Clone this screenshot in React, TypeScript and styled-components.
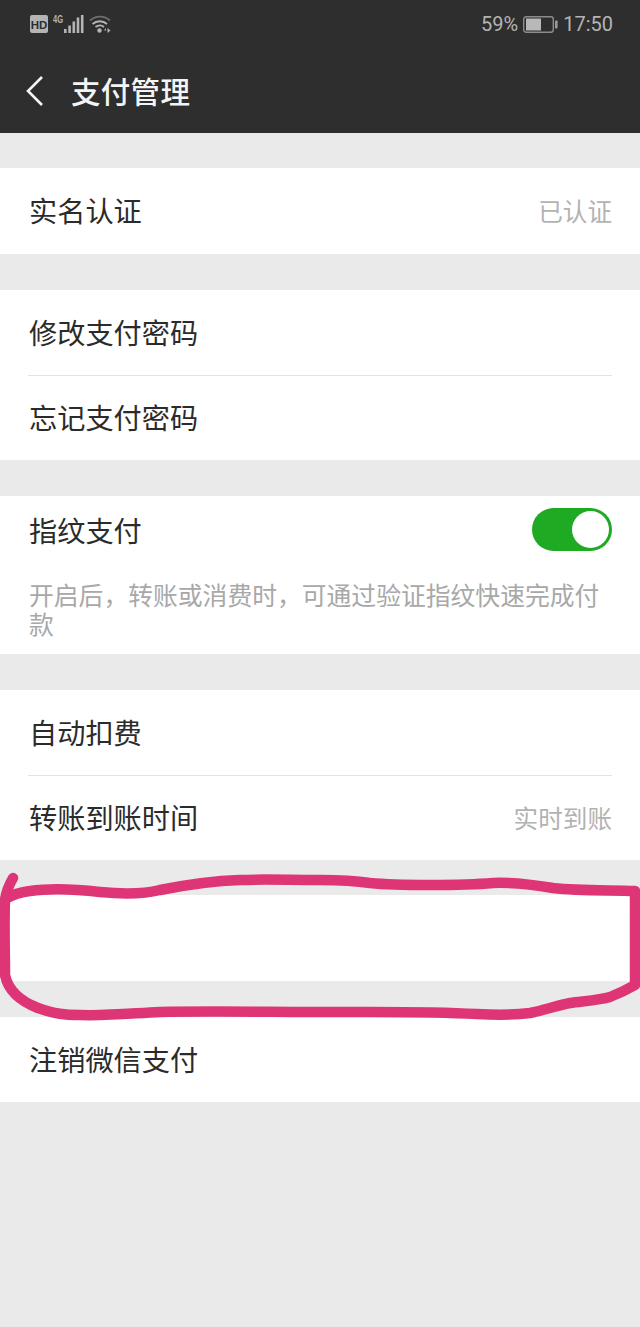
import React from "react";
import styled, { createGlobalStyle } from "styled-components";

const Global = createGlobalStyle`
  html, body { margin: 0; padding: 0; background: #eaeaea; }
  body { font-family: "Noto Sans CJK SC", "Noto Sans", sans-serif; }
`;

const Page = styled.div`
  position: relative;
  width: 640px;
  height: 1327px;
  overflow: hidden;
  background: #eaeaea;
`;

const Header = styled.header`
  height: 133px;
  box-sizing: border-box;
  background: #2e2e2e;
  display: flex;
  flex-direction: column;
`;

const StatusBar = styled.div`
  height: 48px;
  box-sizing: border-box;
  padding: 0 27px 0 30px;
  display: flex;
  align-items: center;
  justify-content: space-between;
`;

const StatusGroup = styled.div`
  display: flex;
  align-items: center;
  gap: 5px;
`;

const StatusText = styled.span`
  font-family: "Roboto", sans-serif;
  font-size: 20px;
  color: #b4b4b4;
  line-height: 1;
`;

const TitleBar = styled.div`
  flex: 1;
  display: flex;
  align-items: center;
  padding: 0 0 0 26px;
  gap: 27px;
`;

const Title = styled.h1`
  margin: 0;
  font-size: 29.5px;
  font-weight: 500;
  letter-spacing: 0.3px;
  color: #f4f4f4;
  line-height: 1;
`;

const Card = styled.section<{ $top: number }>`
  margin-top: ${(p) => p.$top}px;
  background: #fff;
`;

const Row = styled.div<{ $h?: number }>`
  height: ${(p) => p.$h ?? 85}px;
  box-sizing: border-box;
  margin: 0 28px 0 29px;
  padding-bottom: 1px;
  display: flex;
  align-items: center;
  justify-content: space-between;
`;

const Divider = styled.div`
  height: 1px;
  margin-left: 28px;
  margin-right: 28px;
  background: #e4e4e4;
`;

const Label = styled.span`
  font-size: 28.2px;
  color: #2b2b2b;
  line-height: 1;
`;

const Value = styled.span`
  font-size: 24.6px;
  color: #b2b2b2;
  line-height: 1;
`;

const Switch = styled.div`
  width: 80px;
  height: 43px;
  box-sizing: border-box;
  padding: 3px;
  margin-bottom: 3px;
  border-radius: 22px;
  background: #1faa24;
  display: flex;
  justify-content: flex-end;
`;

const Knob = styled.div`
  width: 37px;
  height: 37px;
  border-radius: 50%;
  background: #fff;
`;

const Hint = styled.p`
  margin: 0;
  padding: 14px 28px 16px 29px;
  font-size: 24.8px;
  line-height: 29px;
  color: #a8a8a8;
`;

const Scribble = styled.svg`
  position: absolute;
  left: 0;
  top: 0;
  pointer-events: none;
`;

const HdIcon = () => (
  <svg width="18" height="18" viewBox="0 0 18 18">
    <rect width="18" height="18" rx="2" fill="#b4b4b4" />
    <text x="9" y="13.5" textAnchor="middle" fontFamily="Liberation Sans" fontWeight="700" fontSize="11.5" fill="#2e2e2e">HD</text>
  </svg>
);

const SignalIcon = () => (
  <svg width="31" height="20" viewBox="0 0 31 20">
    <text x="0" y="8.5" fontFamily="Liberation Sans" fontWeight="700" fontSize="10" textLength="10" lengthAdjust="spacingAndGlyphs" fill="#b4b4b4">4G</text>
    <rect x="11" y="15" width="2.6" height="4" fill="#b4b4b4" />
    <rect x="15.3" y="11.5" width="2.6" height="7.5" fill="#b4b4b4" />
    <rect x="19.5" y="7.5" width="2.6" height="11.5" fill="#b4b4b4" />
    <rect x="23.7" y="3.5" width="2.6" height="15.5" fill="#b4b4b4" />
    <rect x="27.9" y="1" width="2.6" height="18" fill="#b4b4b4" />
  </svg>
);

const WifiIcon = () => (
  <svg width="22" height="20" viewBox="0 0 22 20" fill="none">
    <path d="M1 6.5C6.5 1.2 15.5 1.2 21 6.5" stroke="#6f6f6f" strokeWidth="1.8" />
    <path d="M3.5 10C7.5 6.3 14 6.3 18 10" stroke="#b4b4b4" strokeWidth="1.8" />
    <path d="M6.5 13C9 11 12.6 11 15 13" stroke="#b4b4b4" strokeWidth="1.8" />
    <circle cx="10.5" cy="16.5" r="2.2" fill="#b4b4b4" />
    <path d="M17 19v-5l-2 2.5h2M18.5 14v5l3-2.5z" fill="#b4b4b4" />
  </svg>
);

const BatteryIcon = () => (
  <svg width="35" height="17" viewBox="0 0 35 17" fill="none">
    <rect x="0.7" y="0.7" width="29.6" height="15.6" rx="2.5" stroke="#8c8c8c" strokeWidth="1.4" />
    <rect x="3" y="2.5" width="15" height="12" fill="#b8b8b8" />
    <rect x="32" y="4.5" width="2.6" height="8" rx="0.8" fill="#9a9a9a" />
  </svg>
);

const BackIcon = () => (
  <svg width="18" height="32" viewBox="0 0 18 32" fill="none">
    <path d="M16 2L2 16L16 30" stroke="#f4f4f4" strokeWidth="2.6" />
  </svg>
);

export default function App() {
  return (
    <Page>
      <Global />
      <Header>
        <StatusBar>
          <StatusGroup>
            <HdIcon />
            <SignalIcon />
            <WifiIcon />
          </StatusGroup>
          <StatusGroup>
            <StatusText>59%</StatusText>
            <BatteryIcon />
            <StatusText>17:50</StatusText>
          </StatusGroup>
        </StatusBar>
        <TitleBar>
          <BackIcon />
          <Title>支付管理</Title>
        </TitleBar>
      </Header>

      <Card $top={35}>
        <Row $h={86}>
          <Label>实名认证</Label>
          <Value>已认证</Value>
        </Row>
      </Card>

      <Card $top={36}>
        <Row>
          <Label>修改支付密码</Label>
        </Row>
        <Divider />
        <Row $h={84}>
          <Label>忘记支付密码</Label>
        </Row>
      </Card>

      <Card $top={36}>
        <Row $h={70}>
          <Label>指纹支付</Label>
          <Switch>
            <Knob />
          </Switch>
        </Row>
        <Hint>开启后，转账或消费时，可通过验证指纹快速完成付款</Hint>
      </Card>

      <Card $top={36}>
        <Row>
          <Label>自动扣费</Label>
        </Row>
        <Divider />
        <Row $h={84}>
          <Label>转账到账时间</Label>
          <Value>实时到账</Value>
        </Row>
      </Card>

      <Card $top={35}>
        <Row $h={86} />
      </Card>

      <Card $top={36}>
        <Row>
          <Label>注销微信支付</Label>
        </Row>
      </Card>

      <Scribble width="640" height="1327" viewBox="0 0 640 1327" fill="none">
        <path
          d="M13 878C9 885 6 892 5 900C4 925 5 950 5 975C8 990 20 1001 38 1008C55 1014 65 1015 80 1015C110 1016 135 1013 160 1012C210 1011 270 1012 320 1012C370 1012 425 1011 477 1014C495 1015 515 1015 530 1013C545 1010 555 1006 570 1003C585 1001 600 1000 610 997C620 993 628 989 635 985C635 950 635 920 635 891C610 890 580 891 553 888C535 885 515 882 493 883C470 885 450 885 430 885C410 885 390 885 370 883C350 880 335 880 320 880C290 880 260 879 240 880C210 881 180 886 160 890C140 895 120 894 100 892C75 889 50 888 30 891C20 892 12 895 6 899"
          stroke="#de3577"
          strokeWidth="10.5"
          strokeLinecap="round"
          strokeLinejoin="round"
        />
      </Scribble>
    </Page>
  );
}
